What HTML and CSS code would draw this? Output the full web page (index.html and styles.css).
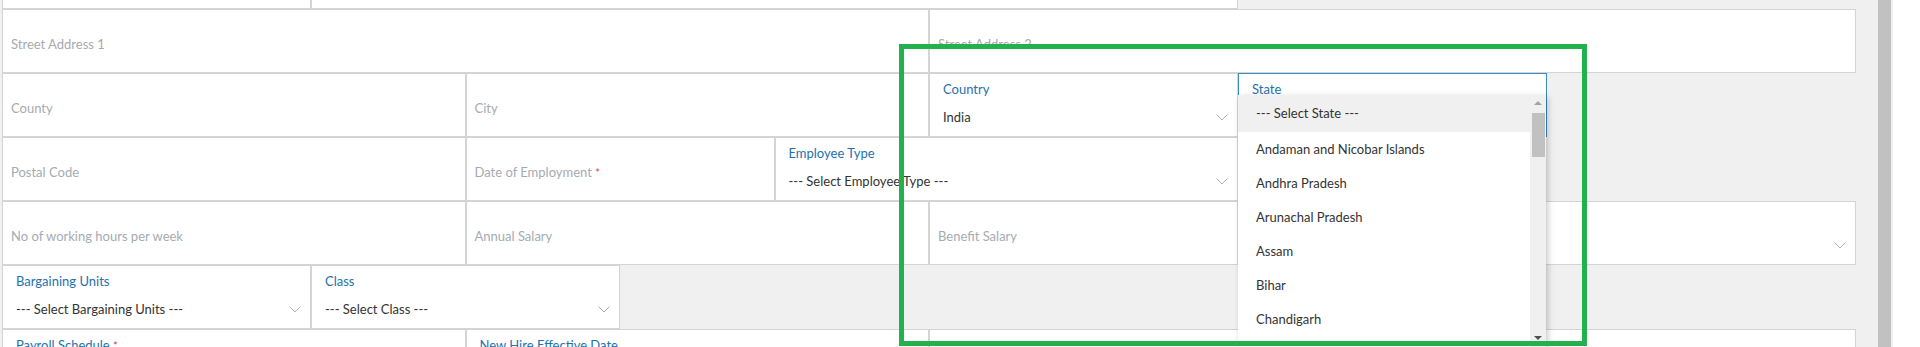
FILE: index.html
```html
<!DOCTYPE html>
<html lang="en">
<head>
    <meta charset="UTF-8">
    <meta name="viewport" content="width=device-width, initial-scale=1.0">
    <title>Employee Details</title>
    <link rel="stylesheet" href="styles.css">
</head>
<body>
    <div class="page">
        <div class="content">
            <div class="form">
                <div class="row">
                    <div class="cell w2"></div>
                    <div class="cell w6"></div>
                </div>
                <div class="row">
                    <div class="cell w6 input"><div class="ph">Street Address 1</div></div>
                    <div class="cell w6 input"><div class="ph">Street Address 2</div></div>
                </div>
                <div class="row">
                    <div class="cell w3 input"><div class="ph">County</div></div>
                    <div class="cell w3 input"><div class="ph">City</div></div>
                    <div class="cell w2">
                        <div class="label">Country</div>
                        <div class="value">
                            <span>India</span>
                            <svg class="chev" width="12" height="7" viewBox="0 0 12 7"><polyline points="0.5,0.5 6,6 11.5,0.5"/></svg>
                        </div>
                    </div>
                    <div class="cell w2 focused">
                        <div class="label">State</div>
                        <div class="dropdown">
                            <ul class="options">
                                <li class="active">--- Select State ---</li>
                                <li>Andaman and Nicobar Islands</li>
                                <li>Andhra Pradesh</li>
                                <li>Arunachal Pradesh</li>
                                <li>Assam</li>
                                <li>Bihar</li>
                                <li>Chandigarh</li>
                            </ul>
                            <div class="track">
                                <div class="arrow up"></div>
                                <div class="thumb"></div>
                                <div class="fill"></div>
                                <div class="arrow down"></div>
                            </div>
                        </div>
                    </div>
                </div>
                <div class="row">
                    <div class="cell w3 input"><div class="ph">Postal Code</div></div>
                    <div class="cell w2 input"><div class="ph">Date of Employment <span class="req">*</span></div></div>
                    <div class="cell w3">
                        <div class="label">Employee Type</div>
                        <div class="value">
                            <span>--- Select Employee Type ---</span>
                            <svg class="chev" width="12" height="7" viewBox="0 0 12 7"><polyline points="0.5,0.5 6,6 11.5,0.5"/></svg>
                        </div>
                    </div>
                </div>
                <div class="row">
                    <div class="cell w3 input"><div class="ph">No of working hours per week</div></div>
                    <div class="cell w3 input"><div class="ph">Annual Salary</div></div>
                    <div class="cell w2 input"><div class="ph">Benefit Salary</div></div>
                    <div class="cell w4">
                        <div class="label"></div>
                        <div class="value">
                            <span></span>
                            <svg class="chev" width="12" height="7" viewBox="0 0 12 7"><polyline points="0.5,0.5 6,6 11.5,0.5"/></svg>
                        </div>
                    </div>
                </div>
                <div class="row">
                    <div class="cell w2">
                        <div class="label">Bargaining Units</div>
                        <div class="value">
                            <span>--- Select Bargaining Units ---</span>
                            <svg class="chev" width="12" height="7" viewBox="0 0 12 7"><polyline points="0.5,0.5 6,6 11.5,0.5"/></svg>
                        </div>
                    </div>
                    <div class="cell w2">
                        <div class="label">Class</div>
                        <div class="value">
                            <span>--- Select Class ---</span>
                            <svg class="chev" width="12" height="7" viewBox="0 0 12 7"><polyline points="0.5,0.5 6,6 11.5,0.5"/></svg>
                        </div>
                    </div>
                </div>
                <div class="row">
                    <div class="cell w3"><div class="label">Payroll Schedule <span class="req">*</span></div></div>
                    <div class="cell w3"><div class="label">New Hire Effective Date</div></div>
                    <div class="cell w3 input"></div>
                    <div class="cell w3"><div class="label">Job Position</div></div>
                </div>
            </div>
        </div>
        <div class="scrollbar"></div>
        <div class="scroll-edge"></div>
        <div class="highlight"></div>
    </div>
</body>
</html>
```

FILE: styles.css
```css
* {
    box-sizing: border-box;
}
body {
    margin: 0;
    background: #fff;
    font-family: Lato, "Open Sans", sans-serif;
    font-size: 13px;
    color: #333;
}
.page {
    position: relative;
    display: flex;
    height: 347px;
    overflow: hidden;
}
.content {
    width: 1878px;
    background: #f0f0f0;
    padding-left: 2px;
}
.form {
    width: 1854px;
    margin-top: -55px;
}
.row {
    display: flex;
    height: 64px;
}
.cell {
    position: relative;
    height: 64px;
    background: #fff;
    border: 1px solid #d4d4d4;
    padding-left: 13px;
}
.w2 { width: 16.6667%; }
.w3 { width: 25%; }
.w4 { width: 33.3333%; }
.w6 { width: 50%; }
.cell.input {
    padding-left: 8px;
}
.ph {
    margin-top: 26px;
    line-height: 16px;
    color: #a5abb1;
}
.label {
    margin-top: 7px;
    height: 16px;
    line-height: 16px;
    color: #2571ad;
}
.req {
    color: #e8413c;
    font-size: 11px;
}
.value {
    display: flex;
    justify-content: space-between;
    align-items: center;
    height: 16px;
    margin-top: 12px;
    padding-right: 9px;
    line-height: 16px;
    color: #333;
}
.chev polyline {
    fill: none;
    stroke: #aab3bc;
    stroke-width: 1;
}
.focused {
    border-color: #3a8ccb;
}
.dropdown {
    position: absolute;
    top: 21px;
    left: -1px;
    width: 308px;
    height: 252px;
    display: flex;
    background: #fff;
    box-shadow: 2px 2px 6px rgba(0, 0, 0, 0.22);
    z-index: 2;
}
.options {
    flex: 1;
    list-style: none;
    margin: 0;
    padding: 0;
}
.options li {
    height: 34px;
    line-height: 34px;
    padding-left: 18px;
    color: #333;
}
.options li.active {
    height: 37px;
    line-height: 37px;
    background: #f0f0f0;
}
.track {
    width: 16px;
    display: flex;
    flex-direction: column;
    align-items: center;
    background: #f0f0f0;
}
.arrow {
    width: 0;
    height: 0;
    margin: 6px 0;
    border-left: 4px solid transparent;
    border-right: 4px solid transparent;
}
.arrow.up {
    border-bottom: 4px solid #a3a3a3;
}
.arrow.down {
    border-top: 4px solid #505050;
    margin-bottom: 7px;
}
.thumb {
    width: 13px;
    height: 44px;
    margin-top: 2px;
    margin-left: 1px;
    background: #c1c1c1;
}
.fill {
    flex: 1;
}
.scrollbar {
    width: 13px;
    background: #c1c1c1;
}
.scroll-edge {
    width: 2px;
    background: #f0f0f0;
}
.highlight {
    position: absolute;
    left: 899px;
    top: 44px;
    width: 688px;
    height: 302px;
    border: 5px solid #22b14c;
    z-index: 3;
}
```
